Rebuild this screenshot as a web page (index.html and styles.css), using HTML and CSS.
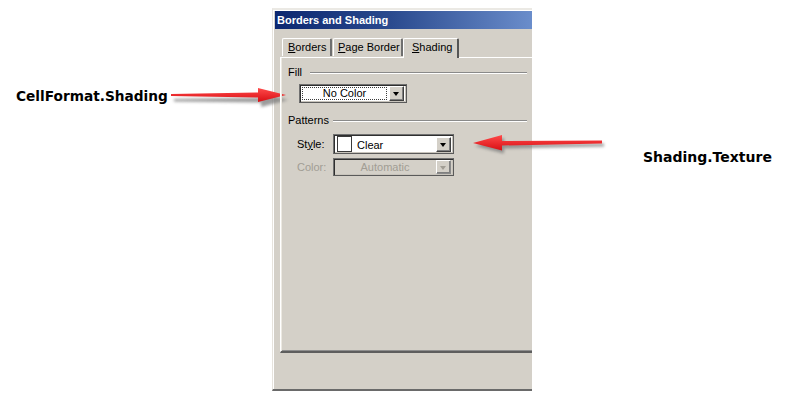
FILE: index.html
```html
<!DOCTYPE html>
<html>
<head>
<meta charset="utf-8">
<link rel="stylesheet" href="styles.css">
</head>
<body>
<div class="stage">
  <div class="dialog">
    <div class="titlebar">Borders and Shading</div>
    <div class="tabs">
      <div class="tab tab-borders"><u>B</u>orders</div>
      <div class="tab tab-page"><u>P</u>age Border</div>
      <div class="tab tab-active"><u>S</u>hading</div>
    </div>
    <div class="panel">
      <div class="group group-fill">
        <span class="group-label">Fill</span>
        <span class="group-line"></span>
      </div>
      <div class="combo combo-fill">
        <div class="combo-field"><span class="focus">No Color</span></div>
        <div class="combo-btn"><span class="tri"></span></div>
      </div>
      <div class="group group-patterns">
        <span class="group-label">Patterns</span>
        <span class="group-line"></span>
      </div>
      <div class="row row-style">
        <span class="row-label">St<u>y</u>le:</span>
        <div class="combo combo-style">
          <div class="combo-field field-left"><span class="swatch"></span><span class="clear-text">Clear</span></div>
          <div class="combo-btn"><span class="tri"></span></div>
        </div>
      </div>
      <div class="row row-color">
        <span class="row-label disabled">Color:</span>
        <div class="combo combo-disabled">
          <div class="combo-field field-disabled">Automatic</div>
          <div class="combo-btn btn-disabled"><span class="tri tri-disabled"></span></div>
        </div>
      </div>
    </div>
    <div class="footer"></div>
  </div>

  <div class="note note-cell">CellFormat.Shading</div>
  <div class="note note-texture">Shading.Texture</div>

  <svg class="arrow arrow-right" width="135" height="34" viewBox="0 0 135 34">
    <defs>
      <filter id="sh1" x="-10%" y="-50%" width="120%" height="200%">
        <feGaussianBlur stdDeviation="1.6"/>
      </filter>
      <linearGradient id="rg1" x1="0" y1="0" x2="0" y2="1">
        <stop offset="0" stop-color="#ff4a4a"/>
        <stop offset="1" stop-color="#d80f14"/>
      </linearGradient>
    </defs>
    <polygon points="8,16 95,14.5 95,10 122,17 95,24 95,19.5 8,18.5" fill="#7a7a7a" opacity="0.75" filter="url(#sh1)" transform="translate(1,3)"/>
    <polygon points="6,14 93,12.5 93,8 121,15 93,22 93,17.5 6,16" fill="url(#rg1)"/>
  </svg>

  <svg class="arrow arrow-left" width="150" height="34" viewBox="0 0 150 34">
    <defs>
      <filter id="sh2" x="-10%" y="-50%" width="120%" height="200%">
        <feGaussianBlur stdDeviation="1.6"/>
      </filter>
      <linearGradient id="rg2" x1="0" y1="0" x2="0" y2="1">
        <stop offset="0" stop-color="#ff4a4a"/>
        <stop offset="1" stop-color="#d80f14"/>
      </linearGradient>
    </defs>
    <polygon points="8,15 37,7 37,13 137,12.5 137,15.5 37,17.5 37,22.5" fill="#7a7a7a" opacity="0.75" filter="url(#sh2)" transform="translate(2,3)"/>
    <polygon points="8,15 37,7 37,13 137,12.5 137,15.5 37,17.5 37,22.5" fill="url(#rg2)"/>
  </svg>
</div>
</body>
</html>
```

FILE: styles.css
```css
* { box-sizing: border-box; }

html, body {
  margin: 0;
  padding: 0;
  background: #ffffff;
}

.stage {
  position: relative;
  width: 802px;
  height: 404px;
  padding: 8px 0 0 272px;
  overflow: hidden;
}

.dialog {
  width: 260px;
  height: 383px;
  background: #d4d0c8;
  border-top: 2px solid #ebe9e4;
  border-left: 1px solid #e6e3dd;
  border-bottom: 2px solid #6a6a6a;
  box-shadow: inset 1px 0 0 #ffffff, inset 0 1px 0 #ffffff;
  padding: 1px 0 0 1px;
  display: flex;
  flex-direction: column;
  font-family: Tahoma, "Liberation Sans", "DejaVu Sans", sans-serif;
  font-size: 11px;
  color: #000;
  overflow: hidden;
}

.titlebar {
  height: 18px;
  margin-left: 1px;
  padding-left: 2px;
  line-height: 18px;
  font-weight: bold;
  color: #ffffff;
  background: linear-gradient(to right, #0c2770 0%, #2a4a8e 45%, #6a8dcb 100%);
  white-space: nowrap;
}

.tabs {
  display: flex;
  align-items: flex-end;
  height: 20px;
  margin-top: 8px;
  padding-left: 8px;
  position: relative;
  z-index: 2;
}

.tab {
  height: 18px;
  line-height: 16px;
  padding: 0 4px 0 5px;
  background: #d4d0c8;
  border-top: 1px solid #ffffff;
  border-left: 1px solid #ffffff;
  border-right: 2px solid #6f6f6f;
  border-radius: 2px 2px 0 0;
  white-space: nowrap;
  margin-bottom: 1px;
  overflow: hidden;
}

.tab-borders { width: 50px; }
.tab-page { width: 70px; margin-left: 1px; padding-left: 4px; padding-right: 0; }
.tab-active {
  width: 56px;
  height: 20px;
  line-height: 17px;
  margin-bottom: -1px;
  padding-left: 8px;
  border-right: 2px solid #555555;
}

.panel {
  height: 296px;
  margin-left: 6px;
  width: 270px;
  border-top: 1px solid #ffffff;
  border-left: 1px solid #ffffff;
  border-bottom: 2px solid #5e5e5e;
  box-shadow: inset 1px 0 0 #ece9e2, inset 0 -1px 0 #8e8e8e;
  padding: 8px 0 0 7px;
  position: relative;
  z-index: 1;
}

.group {
  display: flex;
  align-items: center;
  height: 13px;
  width: 239px;
}

.group-label {
  line-height: 13px;
  white-space: nowrap;
}

.group-line {
  flex: 1;
  height: 2px;
  border-top: 1px solid #8a8a8a;
  border-bottom: 1px solid #ffffff;
  margin-left: 8px;
}

.group-patterns { margin-top: 11px; }
.group-patterns .group-line { margin-left: 4px; }

.combo {
  display: flex;
  background: #ffffff;
  border: 1px solid #6c6c6c;
  border-color: #707070 #5a5a5a #5a5a5a #707070;
  box-shadow: inset 1px 1px 0 #2f2f2f, inset -1px -1px 0 #c8c4bc;
  padding: 2px;
}

.combo-fill {
  width: 108px;
  height: 19px;
  margin: 5px 0 0 11px;
}

.combo-field {
  flex: 1;
  display: flex;
  align-items: center;
  justify-content: center;
  padding-right: 2px;
}

.focus {
  display: flex;
  align-items: center;
  justify-content: center;
  width: 100%;
  height: 100%;
  outline: 1px dotted #3c3c3c;
  outline-offset: -1px;
  line-height: 13px;
}

.combo-btn {
  width: 15px;
  height: 15px;
  background: #d4d0c8;
  border-top: 1px solid #ffffff;
  border-left: 1px solid #ffffff;
  border-right: 1px solid #404040;
  border-bottom: 1px solid #404040;
  box-shadow: inset -1px -1px 0 #808080;
  display: flex;
  align-items: center;
  justify-content: center;
  align-self: center;
}

.tri {
  width: 0;
  height: 0;
  border-left: 3.5px solid transparent;
  border-right: 3.5px solid transparent;
  border-top: 4px solid #000;
  margin-top: 1px;
  margin-right: 1px;
}

.row {
  display: flex;
  align-items: center;
  padding-left: 9px;
}

.row-label {
  width: 36px;
  line-height: 13px;
}

.row-style { margin-top: 7px; }
.row-color { margin-top: 4px; }

.combo-style {
  width: 121px;
  height: 20px;
}

.field-left {
  justify-content: flex-start;
  padding-left: 1px;
}

.swatch {
  width: 15px;
  height: 16px;
  border: 1px solid #3a3a3a;
  background: #fff;
}

.clear-text {
  margin-left: 5px;
  margin-top: 3px;
  line-height: 13px;
}

.combo-disabled {
  width: 121px;
  height: 18px;
  background: #d4d0c8;
  padding: 1px 2px;
}

.field-disabled {
  color: #a19d94;
}

.disabled { color: #a19d94; }

.btn-disabled {
  height: 14px;
  border-right-color: #8a8a8a;
  border-bottom-color: #8a8a8a;
}

.tri-disabled {
  border-top-color: #a19d94;
}

.footer { flex: 1; }

.note {
  position: absolute;
  font-family: Verdana, "DejaVu Sans", sans-serif;
  font-weight: bold;
  color: #000;
  white-space: nowrap;
  line-height: 16px;
}

.note-cell { left: 16px; top: 88px; font-size: 13.7px; }
.note-texture { left: 643px; top: 149px; font-size: 14px; }

.arrow { position: absolute; }
.arrow-right { left: 165px; top: 80px; }
.arrow-left { left: 465px; top: 128px; }
```
